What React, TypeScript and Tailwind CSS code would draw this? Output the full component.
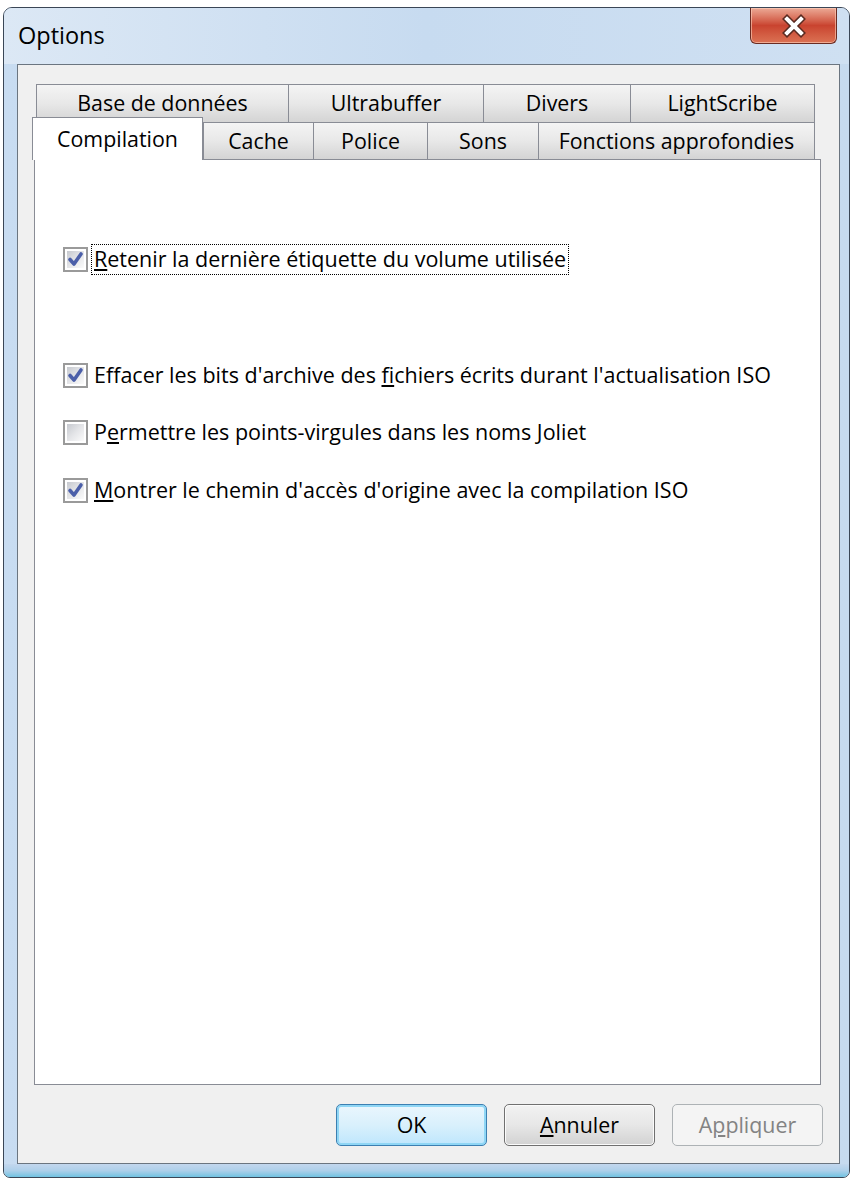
import type { ReactNode } from "react";

const font = { fontFamily: '"Open Sans", "Noto Sans", "Liberation Sans", sans-serif' };

function Tab({ label, width, last }: { label: string; width: string; last?: boolean }) {
  return (
    <div
      className={`${width} h-full shrink-0 flex items-center justify-center border-l border-t border-[#898c95] bg-gradient-to-b from-[#f4f4f4] via-[#e8e8e8] to-[#d4d4d4] text-[21.4px] text-black ${last ? "border-r" : ""}`}
    >
      {label}
    </div>
  );
}

function CheckBox({ checked }: { checked: boolean }) {
  return (
    <div className="w-[25px] h-[25px] shrink-0 border-2 border-[#9a9a9a] bg-white p-[2px]">
      <div className="w-full h-full bg-gradient-to-br from-[#c6c9cf] via-[#e4e5e8] to-[#fbfbfb] flex items-center justify-center">
        {checked && (
          <svg width="17" height="17" viewBox="0 0 17 17">
            <path d="M3 8.5 L7 13 L14 3" fill="none" stroke="#4b5fa9" strokeWidth="3.6" strokeLinejoin="round" strokeLinecap="round" />
          </svg>
        )}
      </div>
    </div>
  );
}

function Option({ checked, focused, children, className }: { checked: boolean; focused?: boolean; children: ReactNode; className?: string }) {
  return (
    <div className={`flex items-center h-[31px] ${className ?? ""}`}>
      <CheckBox checked={checked} />
      <div
        className={`ml-[3px] px-[2px] h-[31px] flex items-center border border-dotted ${focused ? "border-black" : "border-transparent"}`}
      >
        <span className="text-[21.5px] text-black whitespace-nowrap">{children}</span>
      </div>
    </div>
  );
}

function CloseButton() {
  return (
    <div className="mr-[12px] w-[87px] h-[36px] rounded-b-[6px] border border-t-0 border-[#6a2b22] bg-gradient-to-b from-[#eba996] via-[#c9432f] to-[#db7254] shadow-[inset_0_0_0_1px_rgba(255,210,190,0.6)] flex items-center justify-center">
      <svg width="30" height="24" viewBox="0 0 30 24">
        <path d="M8 5 L22 19 M22 5 L8 19" stroke="#5a2a20" strokeWidth="7" strokeLinecap="square" />
        <path d="M8 5 L22 19 M22 5 L8 19" stroke="#ffffff" strokeWidth="4" strokeLinecap="square" />
      </svg>
    </div>
  );
}

export default function App() {
  return (
    <div className="w-[853px] h-[1178px] bg-white overflow-hidden" style={font}>
      <div className="ml-[3px] mt-[7px] w-[847px] h-[1171px] rounded-t-[9px] rounded-b-[7px] border border-[#3a4656] bg-gradient-to-r from-[#c8dcf1] via-[#bcd3ec] to-[#c6daef] flex flex-col overflow-hidden">
        {/* title bar */}
        <div className="h-[56px] shrink-0 flex items-start justify-between bg-gradient-to-r from-[#dce8f5] via-[#c7dbf0] to-[#cfe0f2]">
          <div className="pl-[14px] pt-[10px] text-[23.5px] text-black">Options</div>
          <CloseButton />
        </div>

        {/* client area */}
        <div className="ml-[13px] mr-[9px] h-[1100px] shrink-0 border border-[#6b7580] bg-[#f0f0f0] flex flex-col">
          <div className="ml-[16px] mr-[18px] mt-[19px] flex-1 flex flex-col">
            {/* back row */}
            <div className="h-[38px] flex pl-[2px]">
              <Tab label="Base de données" width="w-[252px]" />
              <Tab label="Ultrabuffer" width="w-[195px]" />
              <Tab label="Divers" width="w-[147px]" />
              <Tab label="LightScribe" width="w-[185px]" last />
            </div>
            {/* front row */}
            <div className="h-[37px] flex items-end">
              <div className="relative z-10 -ml-[2px] -mb-px w-[171px] h-[43px] shrink-0 border-l border-t border-r border-[#898c95] bg-white flex items-start justify-center pt-[5px] text-[21.4px] text-black">
                Compilation
              </div>
              <Tab label="Cache" width="w-[110px]" />
              <Tab label="Police" width="w-[114px]" />
              <Tab label="Sons" width="w-[111px]" />
              <Tab label="Fonctions approfondies" width="w-[277px]" last />
            </div>
            {/* panel */}
            <div className="flex-1 border border-[#898c95] bg-white flex flex-col pl-[28px] pt-[84px]">
              <Option checked focused>
                <span className="underline">R</span>etenir la dernière étiquette du volume utilisée
              </Option>
              <Option checked className="mt-[85px]">
                Effacer les bits d'archive des <span className="underline">f</span>ichiers écrits durant l'actualisation ISO
              </Option>
              <Option checked={false} className="mt-[26px]">
                P<span className="underline">e</span>rmettre les points-virgules dans les noms Joliet
              </Option>
              <Option checked className="mt-[27px]">
                <span className="underline">M</span>ontrer le chemin d'accès d'origine avec la compilation ISO
              </Option>
            </div>
          </div>

          {/* buttons */}
          <div className="h-[78px] shrink-0 flex items-start justify-end gap-[17px] pr-[16px] pt-[19px]">
            <button className="w-[151px] h-[42px] rounded-[5px] border border-[#3c7fb1] bg-gradient-to-b from-[#eaf6fd] via-[#d9f0fc] to-[#bee6fd] shadow-[inset_0_0_0_2px_#8fd6f5] text-[21.4px] text-black">
              OK
            </button>
            <button className="w-[151px] h-[42px] rounded-[5px] border border-[#707070] bg-gradient-to-b from-[#f2f2f2] via-[#e7e7e7] to-[#d2d2d2] shadow-[inset_0_0_0_1px_#fbfbfb] text-[21.4px] text-black">
              <span className="underline">A</span>nnuler
            </button>
            <button className="w-[151px] h-[42px] rounded-[5px] border border-[#adb2b5] bg-[#f4f4f4] text-[21.4px] text-[#838383]">
              A<span className="underline">p</span>pliquer
            </button>
          </div>
        </div>

        {/* bottom frame */}
        <div className="flex-1 bg-gradient-to-b from-[#c3d7ee] via-[#aed0ea] to-[#6fc3e2]" />
      </div>
    </div>
  );
}
